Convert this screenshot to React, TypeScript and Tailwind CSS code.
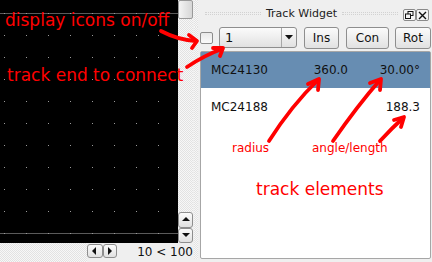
import React from "react";

const hatch =
  "bg-[repeating-conic-gradient(#e2e2e2_0_25%,#f7f7f7_0_50%)] bg-[length:2px_2px]";

function CanvasGrid() {
  const dots: React.ReactNode[] = [];
  for (let x = 4; x < 178; x += 22) {
    for (let y = 13; y < 243; y += 22) {
      dots.push(<rect key={`${x}-${y}`} x={x} y={y} width={1} height={1} fill="#9a9a9a" />);
    }
  }
  return (
    <svg width={178} height={243} className="block">
      <rect width={178} height={243} fill="#000" />
      <line x1={0} y1={13.5} x2={178} y2={13.5} stroke="#5a5a5a" />
      <line x1={0} y1={233.5} x2={178} y2={233.5} stroke="#5a5a5a" />
      {dots}
    </svg>
  );
}

function Tri({ dir }: { dir: "up" | "down" | "left" | "right" }) {
  const p =
    dir === "up"
      ? "1,6 5,2 9,6"
      : dir === "down"
      ? "1,2 9,2 5,6"
      : dir === "left"
      ? "6,1 6,9 2,5"
      : "3,1 3,9 7,5";
  return (
    <svg width={10} height={10} viewBox="0 0 10 10">
      <polygon points={p} fill="#111" />
    </svg>
  );
}

const btnGrad =
  "bg-[linear-gradient(#fbfbfb,#e1e1e1)] border border-[#8e8e8e] rounded-[3px]";

export default function App() {
  return (
    <div className="relative w-[432px] h-[262px] overflow-hidden bg-[#efefef] flex font-['DejaVu_Sans',sans-serif] text-[#111]">
      {/* Left: canvas area */}
      <div className="w-[193px] h-full flex flex-col">
        <div className="flex h-[243px]">
          <div className="w-[178px] h-full">
            <CanvasGrid />
          </div>
          <div className="w-[15px] h-full flex flex-col">
            <div className="h-[19px] bg-[linear-gradient(90deg,#f4f4f4,#d6d6d6)] border border-[#999] rounded-[2px]" />
            <div className={`flex-1 ${hatch}`} />
            <div className={`h-[16px] flex items-center justify-center ${btnGrad}`}>
              <Tri dir="up" />
            </div>
            <div className={`h-[15px] flex items-center justify-center ${btnGrad}`}>
              <Tri dir="down" />
            </div>
          </div>
        </div>
        <div className="h-[19px] flex items-start">
          <div className={`w-[87px] h-full ${hatch}`} />
          <div className="flex pt-[1px]">
            <div className={`w-[16px] h-[14px] flex items-center justify-center ${btnGrad}`}>
              <Tri dir="left" />
            </div>
            <div className={`w-[14px] h-[14px] flex items-center justify-center ${btnGrad}`}>
              <Tri dir="right" />
            </div>
          </div>
          <div className="flex-1 text-right text-[12px] leading-[14px] pt-[2px]">10 &lt; 100</div>
        </div>
      </div>

      {/* Dock */}
      <div className="flex-1 h-full flex flex-col">
        <div className="h-[27px] flex items-start">
          <div className="w-[7px] h-full flex">
            <div className={`w-[4px] h-full ml-[1px] ${hatch}`} />
          </div>
          <div className="flex-1 flex items-center h-full">
            <div className="flex-1 mx-[5px] h-[3px] border-y border-dotted border-[#d2d2d2]" />
            <div className="text-[11px] leading-[13px] text-[#222]">Track Widget</div>
            <div className="flex-1 mx-[5px] h-[3px] border-y border-dotted border-[#d2d2d2]" />
          </div>
          <div className="flex pt-[9px] pr-[3px]">
            <div className="w-[13px] h-[12px] border border-[#8a8a8a] rounded-[2px] bg-[#f4f4f4] flex items-center justify-center">
              <svg width={9} height={8} viewBox="0 0 9 8">
                <rect x={3} y={0.5} width={5} height={4} fill="none" stroke="#111" />
                <rect x={0.5} y={3} width={5} height={4.5} fill="#f4f4f4" stroke="#111" />
              </svg>
            </div>
            <div className="w-[13px] h-[12px] border border-[#8a8a8a] rounded-[2px] bg-[#f4f4f4] flex items-center justify-center">
              <svg width={9} height={9} viewBox="0 0 9 9">
                <path d="M1 1 L8 8 M8 1 L1 8" stroke="#111" strokeWidth={1.4} />
              </svg>
            </div>
          </div>
        </div>

        {/* controls row */}
        <div className="h-[24px] flex items-start">
          <div className="w-[7px] h-full flex">
            <div className={`w-[4px] h-full ml-[1px] ${hatch}`} />
          </div>
          <div className="mt-[5px] w-[13px] h-[12px] border border-[#8c8c8c] rounded-[2px] bg-[linear-gradient(#e8e8e8,#fafafa)]" />
          <div className={`ml-[6px] w-[78px] h-[21px] flex ${btnGrad}`}>
            <div className="flex-1 text-[13px] leading-[19px] pl-[5px]">1</div>
            <div className="w-[15px] h-full border-l border-[#a8a8a8] flex items-center justify-center">
              <svg width={8} height={5} viewBox="0 0 8 5">
                <polygon points="0,0 8,0 4,4.5" fill="#111" />
              </svg>
            </div>
          </div>
          <div className={`ml-[7px] w-[35px] h-[22px] flex items-center justify-center text-[12px] ${btnGrad}`}>Ins</div>
          <div className={`ml-[7px] w-[43px] h-[22px] flex items-center justify-center text-[12px] ${btnGrad}`}>Con</div>
          <div className={`ml-[6px] w-[36px] h-[22px] flex items-center justify-center text-[12px] ${btnGrad}`}>Rot</div>
        </div>

        {/* list */}
        <div className="h-[208px] flex">
          <div className="w-[7px] h-full flex">
            <div className={`w-[4px] h-full ml-[1px] ${hatch}`} />
          </div>
          <div className="w-[231px] h-full bg-white border border-[#a6a6a6] rounded-[2px] text-[12px] leading-[14px]">
            <div className="h-[36px] flex items-center bg-[#678db2]">
              <div className="w-[100px] pl-[10px]">MC24130</div>
              <div className="w-[47px] text-right">360.0</div>
              <div className="w-[72px] text-right">30.00°</div>
            </div>
            <div className="h-[37px] flex items-center">
              <div className="w-[100px] pl-[10px]">MC24188</div>
              <div className="w-[47px] text-right"></div>
              <div className="w-[72px] text-right">188.3</div>
            </div>
          </div>
        </div>
      </div>

      {/* Annotation overlay */}
      <div className="absolute left-[5px] top-[12px] text-[17px] leading-[17px] text-[#ff0000] whitespace-nowrap">display icons on/off</div>
      <div className="absolute left-[7px] top-[67px] text-[17px] leading-[17px] text-[#ff0000] whitespace-nowrap">track end to connect</div>
      <div className="absolute left-[232px] top-[142px] text-[12px] leading-[12px] text-[#ff0000] whitespace-nowrap">radius</div>
      <div className="absolute left-[312px] top-[142px] text-[12px] leading-[12px] text-[#ff0000] whitespace-nowrap">angle/length</div>
      <div className="absolute left-[256px] top-[181px] text-[17px] leading-[17px] text-[#ff0000] whitespace-nowrap">track elements</div>

      <svg className="absolute inset-0 pointer-events-none" width={432} height={262}>
        <g fill="none" stroke="#ff0000" strokeWidth={3.8} strokeLinecap="round" strokeLinejoin="round">
          <path d="M161 31 Q178 40 196 41" />
          <path d="M189 35 L197 41 L192 48" />
          <path d="M187 67 Q205 55 222 49" />
          <path d="M213 48 L223 48 L220 56" />
          <path d="M269 141 Q292 105 318 80" />
          <path d="M308 84 L319 79 L318 90" />
          <path d="M333 141 Q358 105 380 80" />
          <path d="M370 83 L381 79 L380 90" />
          <path d="M380 141 Q392 128 403 118" />
          <path d="M394 120 L404 117 L401 127" />
        </g>
      </svg>
    </div>
  );
}
